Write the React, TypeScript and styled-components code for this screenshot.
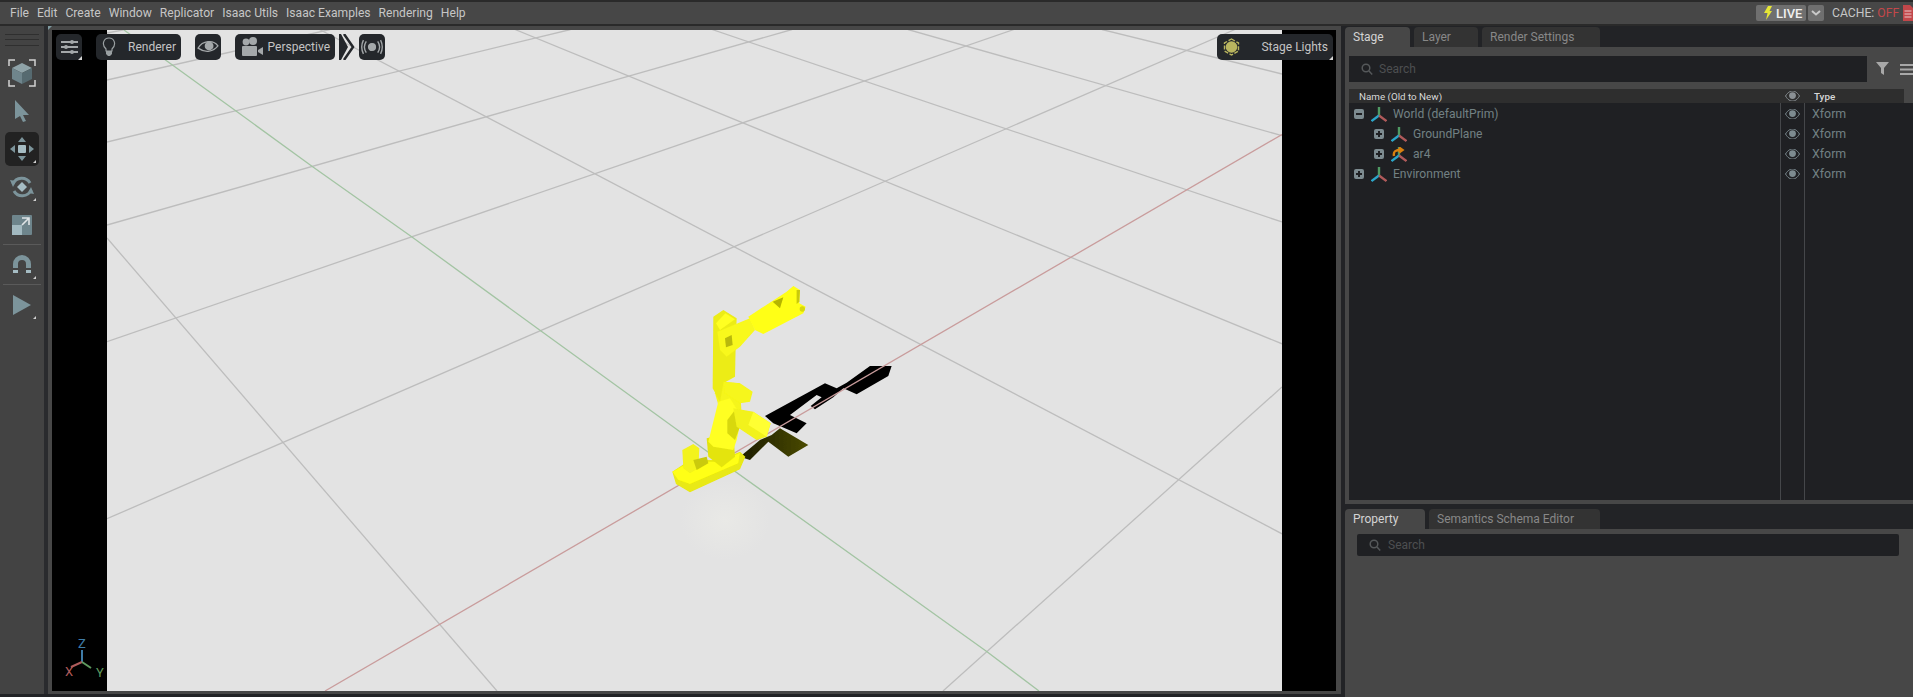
import React from "react";
import styled, { createGlobalStyle } from "styled-components";

const Global = createGlobalStyle`
  html, body { margin: 0; padding: 0; background: #1f2023; }
  * { box-sizing: border-box; }
`;

const Page = styled.div`
  width: 1913px; height: 697px; overflow: hidden; display: flex; flex-direction: column;
  background: #222326; font-family: Roboto, "Liberation Sans", sans-serif; font-size: 12px;
`;
const TopBar = styled.header`
  height: 26px; flex: none; display: flex; align-items: center; background: #474747;
  border-top: 2px solid #2a2a2a; border-bottom: 2px solid #2a2a2a; padding-left: 10px; gap: 8px; color: #c6c6c6;
`;
const MenuItem = styled.span`font-size: 12.1px; line-height: 22px; white-space: nowrap;`;
const Spacer = styled.div`flex: 1;`;
const LiveButton = styled.div`
  width: 50px; height: 16px; border-radius: 2px; background: #6f6f6f; display: flex; align-items: center; gap: 4px;
  padding-left: 8px; color: #f0f0f0; font-size: 13px; font-weight: 500;
`;
const LiveCaret = styled.div`
  width: 16px; height: 16px; margin-left: -6px; border-radius: 2px; background: #6f6f6f; display: flex; align-items: center; justify-content: center;
`;
const Cache = styled.span`font-size: 12.2px; color: #c6c6c6; white-space: nowrap; width: 71px;`;
const Off = styled.span`color: #c2474a;`;
const CacheDoc = styled.svg`width: 10px; height: 16px; margin-left: -8px; flex: none; display: block;`;
const Main = styled.div`flex: 1; min-height: 0; display: flex;`;
const Tools = styled.nav`
  width: 44px; flex: none; background: #434343; display: flex; flex-direction: column; align-items: center; padding-top: 8px;
  margin-bottom: 3px;
`;
const Grip = styled.div`
  width: 34px; height: 12px; margin-bottom: 10px;
  border-top: 1px solid #2f2f2f; border-bottom: 1px solid #2f2f2f; position: relative;
  &::after { content: ""; position: absolute; left: 0; right: 0; top: 4px; height: 1px; background: #2f2f2f; }
`;
const Tool = styled.div<{ $active?: boolean }>`
  width: 34px; height: 34px; display: flex; align-items: center; justify-content: center; border-radius: 5px;
  margin-bottom: 4px; position: relative; background: ${p => (p.$active ? "#222222" : "transparent")};
  &::after { content: ""; position: absolute; right: 3px; bottom: 3px; border-style: solid; border-width: 0 0 3px 3px;
    border-color: transparent transparent #d0d0d0 transparent; }
`;
const PlainTool = styled(Tool)`&::after { display: none; }`;
const ToolRule = styled.div`width: 38px; height: 1px; flex: none; background: #5a5a5a; margin: -2px 0 3px;`;
const Gutter = styled.div`width: 4px; flex: none; background: #2a2b2e; margin-bottom: 3px;`;
const ViewPane = styled.section`
  width: 1293px; flex: none; background: #474747; padding: 4px 5px 3px 4px; margin-bottom: 3px; position: relative;
`;
const Corner = styled.div`
  position: absolute; left: 0; top: 0; border-style: solid; border-width: 4px 4px 0 0; border-color: #7f9aa0 transparent transparent transparent;
`;
const Viewport = styled.div`
  width: 100%; height: 100%; background: #000; display: flex; justify-content: center; position: relative;
`;
const SceneSvg = styled.svg`width: 1175px; height: 661px; display: block; flex: none;`;
const OverlayBar = styled.div`
  position: absolute; left: 4px; right: 3px; top: 4px; display: flex; align-items: center; height: 26px; gap: 14px;
`;
const Pill = styled.div<{ $w: number }>`
  width: ${p => p.$w}px; height: 26px; border-radius: 5px; background: #24272b; display: flex; align-items: center; color: #c4c4c4;
  font-size: 12px; flex: none; position: relative; justify-content: space-between; padding: 0 5px 0 6px;
`;
const IconPill = styled(Pill)`justify-content: center; padding: 0;`;
const Marked = styled(Pill)`
  &::after { content: ""; position: absolute; right: 0; bottom: 0; border-style: solid; border-width: 0 0 4px 4px;
    border-color: transparent transparent #d6d6d6 transparent; }
`;
const MarkedIcon = styled(Marked)`justify-content: center; padding: 0;`;
const BarGap = styled.div`flex: 1;`;
const Chevron = styled.div`margin: 0 -10px; display: flex; flex: none;`;
const AxisMark = styled.svg`position: absolute; left: 4px; bottom: 0; width: 60px; height: 60px;`;
const AxisLabel = styled.text`font: 13px Roboto, sans-serif;`;

const Side = styled.aside`
  flex: 1; min-width: 0; border-left: 4px solid #222326; display: flex; flex-direction: column;
`;
const Tabs = styled.div<{ $h: number; $top: number }>`
  height: ${p => p.$h}px; padding-top: ${p => p.$top}px; background: #222326; display: flex; gap: 4px; flex: none;
`;
const Tab = styled.div<{ $w: number; $active?: boolean }>`
  width: ${p => p.$w}px; height: 20px; border-radius: 4px 4px 0 0; background: ${p => (p.$active ? "#474747" : "#333333")};
  color: ${p => (p.$active ? "#d4d4d4" : "#888888")}; line-height: 21px; font-size: 12px; padding-left: 8px; white-space: nowrap;
`;
const StagePanel = styled.div`
  height: 457px; flex: none; background: #474747; padding: 9px 0 4px 4px; display: flex; flex-direction: column;
`;
const SearchRow = styled.div`display: flex; align-items: center; height: 26px; flex: none; margin-bottom: 7px;`;
const SearchBox = styled.div`
  width: 519px; height: 26px; background: #1f2023; display: flex; align-items: center; gap: 6px; padding-left: 12px; color: #4d4f51; font-size: 12px;
`;
const FilterTools = styled.div`display: flex; align-items: center; margin-left: 9px; gap: 10px;`;
const TreeHeader = styled.div`
  height: 14px; width: 555px; flex: none; background: #2e2e2e; display: flex; color: #d8d8d8; font-size: 9.8px; line-height: 15px;
`;
const HeadName = styled.div`width: 431px; padding-left: 10px;`;
const HeadEye = styled.div`width: 25px; display: flex; align-items: center; justify-content: center;`;
const HeadType = styled.div`padding-left: 9px; font-weight: 500;`;
const TreeBody = styled.div`flex: 1; display: flex; background: #1f2023; min-height: 0;`;
const NameColumn = styled.div`width: 431px; padding-top: 1px;`;
const EyeColumn = styled.div`width: 25px; border-left: 1px solid #45474a; border-right: 1px solid #45474a; padding-top: 1px;`;
const TypeColumn = styled.div`flex: 1; padding-top: 1px;`;
const Row = styled.div<{ $depth?: number }>`
  height: 20px; display: flex; align-items: center; padding-left: ${p => 5 + (p.$depth ?? 0) * 20}px; color: #728083; font-size: 12.1px;
`;
const Toggle = styled.div`
  width: 10px; height: 10px; border-radius: 2px; background: #7d8b90; position: relative; flex: none; margin-right: 7px;
  &::before { content: ""; position: absolute; left: 2px; right: 2px; top: 4px; height: 2px; background: #1f2023; }
`;
const ToggleOpen = styled(Toggle)`
  &::after { content: ""; position: absolute; top: 2px; bottom: 2px; left: 4px; width: 2px; background: #1f2023; }
`;
const PrimLabel = styled.span`margin: 0 0 1px 6px; white-space: nowrap;`;
const EyeCell = styled.div`height: 20px; display: flex; align-items: center; justify-content: center;`;
const TypeCell = styled.div`height: 20px; line-height: 20px; padding-left: 7px; color: #728083; font-size: 12.4px;`;
const PropPanel = styled.div`flex: 1; background: #474747; padding: 5px 14px 0 12px;`;
const PropSearch = styled.div`
  height: 22px; width: 542px; border-radius: 2px; background: #1f2023; display: flex; align-items: center; gap: 7px; padding-left: 12px; color: #4d4f51; font-size: 12px;
`;

const SearchIcon = () => (
  <svg width="12" height="12" viewBox="0 0 12 12" fill="none" stroke="#55585a" strokeWidth="1.5">
    <circle cx="5" cy="5" r="3.8" /><path d="M8 8l3.2 3.4" />
  </svg>
);
const Eye = ({ c = "#7d8b90" }: { c?: string }) => (
  <svg width="15" height="10" viewBox="0 0 15 10">
    <path d="M.5 5C3 1 5.5 0 7.5 0S12 1 14.5 5C12 9 10 10 7.5 10S3 9 .5 5z" fill="none" stroke={c} strokeWidth="1" />
    <circle cx="7.5" cy="4.6" r="3.4" fill={c} />
  </svg>
);
const Xform = ({ ref4 }: { ref4?: boolean }) => (
  <svg width="16" height="15" viewBox="0 0 16 15" fill="none" strokeWidth="2.4">
    <path d="M8 8.500V0" stroke="#4f9a63" />
    <path d="M8 8.500L.5 14" stroke="#2ba5c9" />
    <path d="M8 8.500l7.500 5.500" stroke="#b05a5a" />
    {ref4 && <path d="M3 9C2 4 5 3 10 3M8 .5L11.5 3 8 5.5" stroke="#d9800f" strokeWidth="2.4" />}
  </svg>
);

const tree = [
  { name: "World (defaultPrim)", depth: 0, open: false },
  { name: "GroundPlane", depth: 1, open: true },
  { name: "ar4", depth: 1, open: true, ref4: true },
  { name: "Environment", depth: 0, open: true },
];
const menus = ["File", "Edit", "Create", "Window", "Replicator", "Isaac Utils", "Isaac Examples", "Rendering", "Help"];

type Seg = [number, number, number, number];
const gray: Seg[] = [
  [107, 518.7, 1235, 29.5], [107, 341.7, 1014, 29.5], [107, 225, 792, 29.5], [107, 142, 570.5, 29.5],
  [107, 80, 330, 29.5], [107, 33, 125, 29.5], [943, 691, 1282, 387],
  [107, 238, 497, 691], [319.5, 29.5, 1282, 533.8], [515, 29.5, 1282, 343.8], [712, 29.5, 1282, 222],
  [908, 29.5, 1282, 135.7], [1102, 29.5, 1282, 74],
];

const Scene = () => (
  <SceneSvg viewBox="107 30 1175 661">
    <defs>
      <radialGradient id="glow"><stop offset="0" stopColor="#e9e9e6" /><stop offset="1" stopColor="#e3e3e3" /></radialGradient>
      <linearGradient id="shade" x1="0" y1="0" x2="1" y2="0"><stop offset="0" stopColor="#1c1c00" /><stop offset="1" stopColor="#4a4a00" /></linearGradient>
      <filter id="soft" x="-5%" y="-5%" width="110%" height="110%"><feGaussianBlur stdDeviation="0.45" /></filter>
    </defs>
    <rect x="107" y="30" width="1175" height="661" fill="#e3e3e3" />
    <ellipse cx="725" cy="520" rx="45" ry="40" fill="url(#glow)" />
    <g stroke="#bdbdbd" strokeWidth="1.3" fill="none">
      {gray.map((s, i) => <line key={i} x1={s[0]} y1={s[1]} x2={s[2]} y2={s[3]} />)}
    </g>
    <polyline points="124,30 236,111 313,167 412,237 541,331 701,447 986,651 1039,691" fill="none" stroke="#a3c4a3" strokeWidth="1.3" />
    <g transform="translate(640 260) scale(.3333)" filter="url(#soft)">
      <path fill="#060600" d="M375 468L555 370L590 385L620 368L690 318L755 318L745 348L650 403L610 385L580 412L525 448L512 438L545 412L530 405L450 465L500 490L470 520L400 490Z" />
      <path fill="url(#shade)" d="M395 525L420 505L505 555L445 590L385 545L330 600L300 590L360 540Z" />
    </g>
    <line x1="325" y1="691" x2="1282" y2="134.5" stroke="#c99c9c" strokeWidth="1.3" />
    <g transform="translate(640 260) scale(.3333)" filter="url(#soft)">
      <path fill="#e9e912" d="M97 635L150 600L240 600L300 575L316 590L300 628L150 697L108 672Z" />
      <path fill="#ffff12" d="M97 635L150 605L240 605L300 578L295 610L150 672L115 660Z" />
      <path fill="#f3f31a" d="M127 570L160 552L178 565L175 625L150 640L130 625Z" />
      <path fill="#caca0f" d="M160 600L200 590L205 610L170 630Z" />
      <path fill="#e4e40f" d="M200 535L280 515L285 590L245 622L205 590Z" />
      <path fill="#f5f51a" d="M225 400L245 365L300 370L305 470L235 435Z" />
      <path fill="#ffff20" d="M205 545L235 425L270 415L305 470L290 540L280 570L220 560Z" />
      <path fill="#d8d810" d="M262 480L285 450L300 500L285 540L262 520Z" />
      <path fill="#f2f21a" d="M280 445L340 455L392 490L380 530L350 540L290 500Z" />
      <path fill="#ffff30" d="M340 455L392 490L380 530L325 495Z" />
      <path fill="#ecec15" d="M218 385L220 170L250 150L290 175L287 260L285 350L250 370L240 425Z" />
      <path fill="#ffff20" d="M228 190L256 160L285 178L240 210Z" />
      <path fill="#f6f61a" d="M250 365L300 370L338 395L330 425L300 430L255 400Z" />
      <path fill="#f8f81a" d="M232 215L330 175L345 210L300 260L260 290L240 270Z" />
      <path fill="#b8b80c" d="M255 235L275 225L278 255L258 262Z" />
      <path fill="#ffff14" d="M325 170L440 95L460 78L480 90L478 130L497 140L490 160L370 222L345 210Z" />
      <path fill="#b5b500" d="M398 125L430 112L420 145Z" />
      <path fill="#c9c90a" d="M470 90L480 90L478 125L470 132Z" />
      <circle cx="487" cy="147" r="8" fill="#d8d810" />
    </g>
  </SceneSvg>
);

const ArrowIcon = () => (
  <svg width="18" height="22" viewBox="0 0 18 22"><path d="M2 0l14 15-6 0 3 6-3 1-3-6-5 3z" fill="#7c949b" /></svg>
);

export default function App() {
  return (
    <Page>
      <Global />
      <TopBar>
        {menus.map(m => <MenuItem key={m}>{m}</MenuItem>)}
        <Spacer />
        <LiveButton>
          <svg width="8" height="14" viewBox="0 0 8 14"><path d="M4 0h4L5.5 5H8L2 14l1.5-7H0z" fill="#e6e636" /></svg>
          LIVE
        </LiveButton>
        <LiveCaret>
          <svg width="10" height="6" viewBox="0 0 10 6" fill="none" stroke="#c8c8c8" strokeWidth="2"><path d="M1 1l4 3.5L9 1" /></svg>
        </LiveCaret>
        <Cache>CACHE: <Off>OFF</Off></Cache>
        <CacheDoc viewBox="0 0 10 16">
          <path d="M0 0h7l3 3v13H0z" fill="#c2474a" />
          <path d="M1.500 6h7M1.500 9h7M1.500 12h7" stroke="#e8c8c8" strokeWidth="1" />
        </CacheDoc>
      </TopBar>
      <Main>
        <Tools>
          <Grip />
          <PlainTool>
            <svg width="28" height="28" viewBox="0 0 28 28" fill="none">
              <path d="M1 7V1h6M21 1h6v6M1 21v6h6M21 27h6v-6" stroke="#d2d2d2" strokeWidth="1.5" />
              <path d="M14 4l10 5-10 5L4 9z" fill="#8fa3a8" />
              <path d="M4 9l10 5v11L4 20z" fill="#6f858c" />
              <path d="M24 9l-10 5v11l10-5z" fill="#566a70" />
            </svg>
          </PlainTool>
          <PlainTool><ArrowIcon /></PlainTool>
          <Tool $active>
            <svg width="24" height="24" viewBox="0 0 24 24" fill="#7c949b">
              <rect x="8" y="8" width="8" height="8" rx="1" fill="#a5bcc3" />
              <path d="M12 0l4 5H8zM12 24l4-5H8zM0 12l5-4v8zM24 12l-5-4v8z" />
            </svg>
          </Tool>
          <Tool>
            <svg width="24" height="24" viewBox="0 0 24 24" fill="none">
              <path d="M20 8A9.5 9.5 0 0 0 3 9M4 16a9.5 9.5 0 0 0 17-1" stroke="#7c949b" strokeWidth="3" />
              <path d="M0 5l6 1-3 6zM24 19l-6-1 3-6z" fill="#7c949b" />
              <path d="M12 7l5 5-5 5-5-5z" fill="#a5bcc3" />
            </svg>
          </Tool>
          <PlainTool>
            <svg width="20" height="20" viewBox="0 0 20 20">
              <rect width="20" height="20" rx="1" fill="#6e858c" />
              <rect y="10" width="10" height="10" fill="#a2b9c0" />
              <path d="M10 3h7v7M17 3l-7 7" stroke="#dfe4e6" strokeWidth="1.6" fill="none" />
            </svg>
          </PlainTool>
          <ToolRule />
          <Tool>
            <svg width="20" height="20" viewBox="0 0 20 20" fill="none">
              <path d="M3.5 13V9a6.5 6.5 0 0 1 13 0v4" stroke="#7c949b" strokeWidth="5" />
              <path d="M1 15h5v3H1zM14 15h5v3h-5z" fill="#a5bcc3" />
            </svg>
          </Tool>
          <ToolRule />
          <Tool>
            <svg width="20" height="22" viewBox="0 0 20 22"><path d="M1 1l18 10L1 21z" fill="#7c949b" /></svg>
          </Tool>
        </Tools>
        <Gutter />
        <ViewPane>
          <Corner />
          <Viewport>
            <Scene />
            <OverlayBar>
              <MarkedIcon $w={26}>
                <svg width="17" height="14" viewBox="0 0 17 14" fill="#a4a8aa">
                  <rect y="1" width="17" height="2" /><rect y="6" width="17" height="2" /><rect y="11" width="17" height="2" />
                  <circle cx="11" cy="2" r="2" /><circle cx="5" cy="7" r="2" /><circle cx="11" cy="12" r="2" />
                </svg>
              </MarkedIcon>
              <Pill $w={85}>
                <svg width="14" height="20" viewBox="0 0 14 20" fill="none">
                  <path d="M4 12C-1 7 2 1 7 1s8 6 3 11v2H4z" stroke="#9aa0a2" strokeWidth="1.2" />
                  <path d="M4 14h6v3l-2 2H6l-2-2z" fill="#9aa0a2" />
                </svg>
                <span>Renderer</span>
              </Pill>
              <IconPill $w={26}>
                <svg width="22" height="16" viewBox="0 0 20 14">
                  <path d="M1 8C5 1 15 0 19 6 15 11 8 13 1 8z" fill="none" stroke="#a4a8aa" strokeWidth="1.2" />
                  <circle cx="11" cy="6" r="4" fill="#a4a8aa" />
                </svg>
              </IconPill>
              <Pill $w={100}>
                <svg width="22" height="20" viewBox="0 0 22 20" fill="#a4a8aa">
                  <circle cx="5" cy="5" r="3.4" /><circle cx="12" cy="4" r="4" />
                  <rect x="1" y="9" width="15" height="10" rx="1" /><path d="M17 13l5-3v8l-5-3z" />
                </svg>
                <span>Perspective</span>
              </Pill>
              <Chevron>
                <svg width="16" height="26" viewBox="0 0 16 26" fill="none">
                  <path d="M0 0h2l7 13-7 13H0z" fill="#24272b" />
                  <path d="M5 0l9 13-9 13" stroke="#24272b" strokeWidth="2.5" />
                </svg>
              </Chevron>
              <IconPill $w={26}>
                <svg width="24" height="16" viewBox="0 0 18 14" fill="none" stroke="#a4a8aa" strokeWidth="1.2">
                  <circle cx="9" cy="7" r="3" fill="#a4a8aa" />
                  <path d="M4 2c-2 3-2 7 0 10M14 2c2 3 2 7 0 10M1.500 1c-2 4-2 8 0 12M16.500 1c2 4 2 8 0 12" />
                </svg>
              </IconPill>
              <BarGap />
              <Marked $w={116}>
                <svg width="17" height="18" viewBox="0 0 17 18" fill="none">
                  <path d="M8.500 1l7 4v8l-7 4-7-4V5z" stroke="#b9b55f" strokeWidth="1.4" strokeDasharray="4 1.6" />
                  <circle cx="8.500" cy="9" r="5.800" fill="#b9b55f" />
                </svg>
                <span>Stage Lights</span>
              </Marked>
            </OverlayBar>
            <AxisMark viewBox="0 0 60 60">
              <line x1="26" y1="31" x2="26" y2="19" stroke="#3f7ca8" strokeWidth="2" />
              <line x1="26" y1="31" x2="15" y2="36" stroke="#b05c5c" strokeWidth="2" />
              <line x1="26" y1="31" x2="35" y2="37" stroke="#5f9a5f" strokeWidth="2" />
              <AxisLabel x="22" y="17" fill="#3f7ca8">Z</AxisLabel>
              <AxisLabel x="9" y="45" fill="#b05c5c">X</AxisLabel>
              <AxisLabel x="40" y="46" fill="#5f9a5f">Y</AxisLabel>
            </AxisMark>
          </Viewport>
        </ViewPane>
        <Side>
          <Tabs $h={21} $top={1}>
            <Tab $w={65} $active>Stage</Tab>
            <Tab $w={64}>Layer</Tab>
            <Tab $w={118}>Render Settings</Tab>
          </Tabs>
          <StagePanel>
            <SearchRow>
              <SearchBox><SearchIcon />Search</SearchBox>
              <FilterTools>
                <svg width="14" height="14" viewBox="0 0 14 14" fill="#a8a8a8"><path d="M0 0h13L8 6v7L5 11V6z" /></svg>
                <svg width="13" height="11" viewBox="0 0 13 11" fill="#a8a8a8"><rect width="13" height="2" /><rect y="4.500" width="13" height="2" /><rect y="9" width="13" height="2" /></svg>
              </FilterTools>
            </SearchRow>
            <TreeHeader>
              <HeadName>Name (Old to New)</HeadName>
              <HeadEye><Eye c="#8a9094" /></HeadEye>
              <HeadType>Type</HeadType>
            </TreeHeader>
            <TreeBody>
              <NameColumn>
                {tree.map(t => (
                  <Row key={t.name} $depth={t.depth}>
                    {t.open ? <ToggleOpen /> : <Toggle />}
                    <Xform ref4={t.ref4} />
                    <PrimLabel>{t.name}</PrimLabel>
                  </Row>
                ))}
              </NameColumn>
              <EyeColumn>{tree.map(t => <EyeCell key={t.name}><Eye /></EyeCell>)}</EyeColumn>
              <TypeColumn>{tree.map(t => <TypeCell key={t.name}>Xform</TypeCell>)}</TypeColumn>
            </TreeBody>
          </StagePanel>
          <Tabs $h={25} $top={5}>
            <Tab $w={80} $active>Property</Tab>
            <Tab $w={171}>Semantics Schema Editor</Tab>
          </Tabs>
          <PropPanel>
            <PropSearch><SearchIcon />Search</PropSearch>
          </PropPanel>
        </Side>
      </Main>
    </Page>
  );
}
